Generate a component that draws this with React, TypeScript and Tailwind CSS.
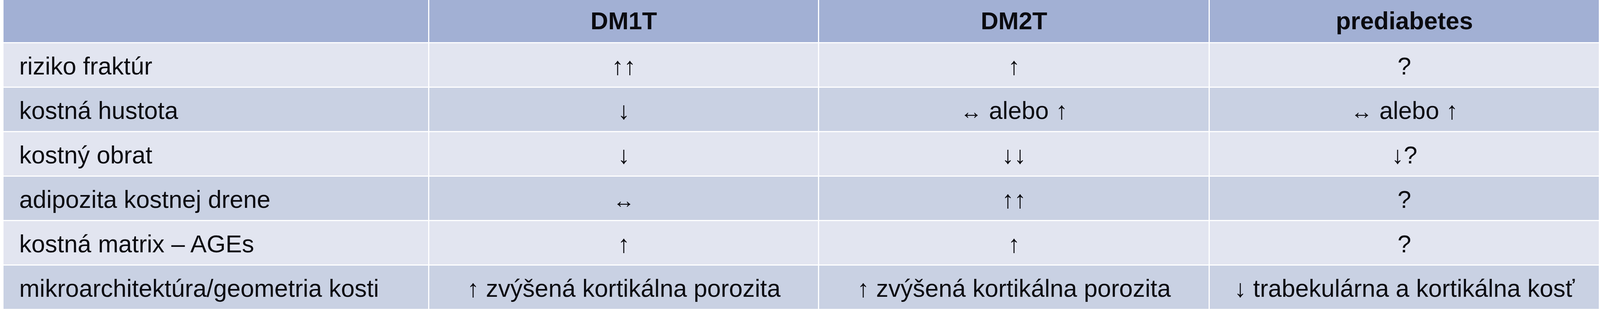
import React from "react";

const LR = () => <span className="text-[0.9em]">↔</span>;

const rows: [React.ReactNode, React.ReactNode, React.ReactNode, React.ReactNode][] = [
  ["riziko fraktúr", "↑↑", "↑", "?"],
  [
    "kostná hustota",
    "↓",
    <>
      <LR /> alebo ↑
    </>,
    <>
      <LR /> alebo ↑
    </>,
  ],
  ["kostný obrat", "↓", "↓↓", "↓?"],
  ["adipozita kostnej drene", <LR />, "↑↑", "?"],
  ["kostná matrix – AGEs", "↑", "↑", "?"],
  [
    "mikroarchitektúra/geometria kosti",
    "↑ zvýšená kortikálna porozita",
    "↑ zvýšená kortikálna porozita",
    "↓ trabekulárna a kortikálna kosť",
  ],
];

export default function App() {
  return (
    <div className="w-full h-[800px] bg-white pl-[0.2314%] pr-[0.07%] font-['Liberation_Sans',Arial,sans-serif] text-[1.527vw] leading-normal text-[#0b0b10]">
      <div className="grid grid-cols-[1147fr_1050fr_1052fr_1051fr] grid-rows-[108px_repeat(6,111px)] gap-[3px]">
        <div className="bg-[#a2b0d4]" />
        <div className="bg-[#a2b0d4] flex items-center justify-center font-bold">DM1T</div>
        <div className="bg-[#a2b0d4] flex items-center justify-center font-bold">DM2T</div>
        <div className="bg-[#a2b0d4] flex items-center justify-center font-bold">prediabetes</div>
        {rows.map((r, i) => {
          const bg = i % 2 === 0 ? "bg-[#e2e5f0]" : "bg-[#c9d1e3]";
          return (
            <React.Fragment key={i}>
              <div className={`${bg} flex items-center pl-[0.972vw] pt-[7px] whitespace-nowrap min-w-0`}>
                <span>{r[0]}</span>
              </div>
              <div className={`${bg} flex items-center justify-center pt-[7px] whitespace-nowrap min-w-0`}>
                <span>{r[1]}</span>
              </div>
              <div className={`${bg} flex items-center justify-center pt-[7px] whitespace-nowrap min-w-0`}>
                <span>{r[2]}</span>
              </div>
              <div className={`${bg} flex items-center justify-center pt-[7px] whitespace-nowrap min-w-0`}>
                <span>{r[3]}</span>
              </div>
            </React.Fragment>
          );
        })}
      </div>
    </div>
  );
}
